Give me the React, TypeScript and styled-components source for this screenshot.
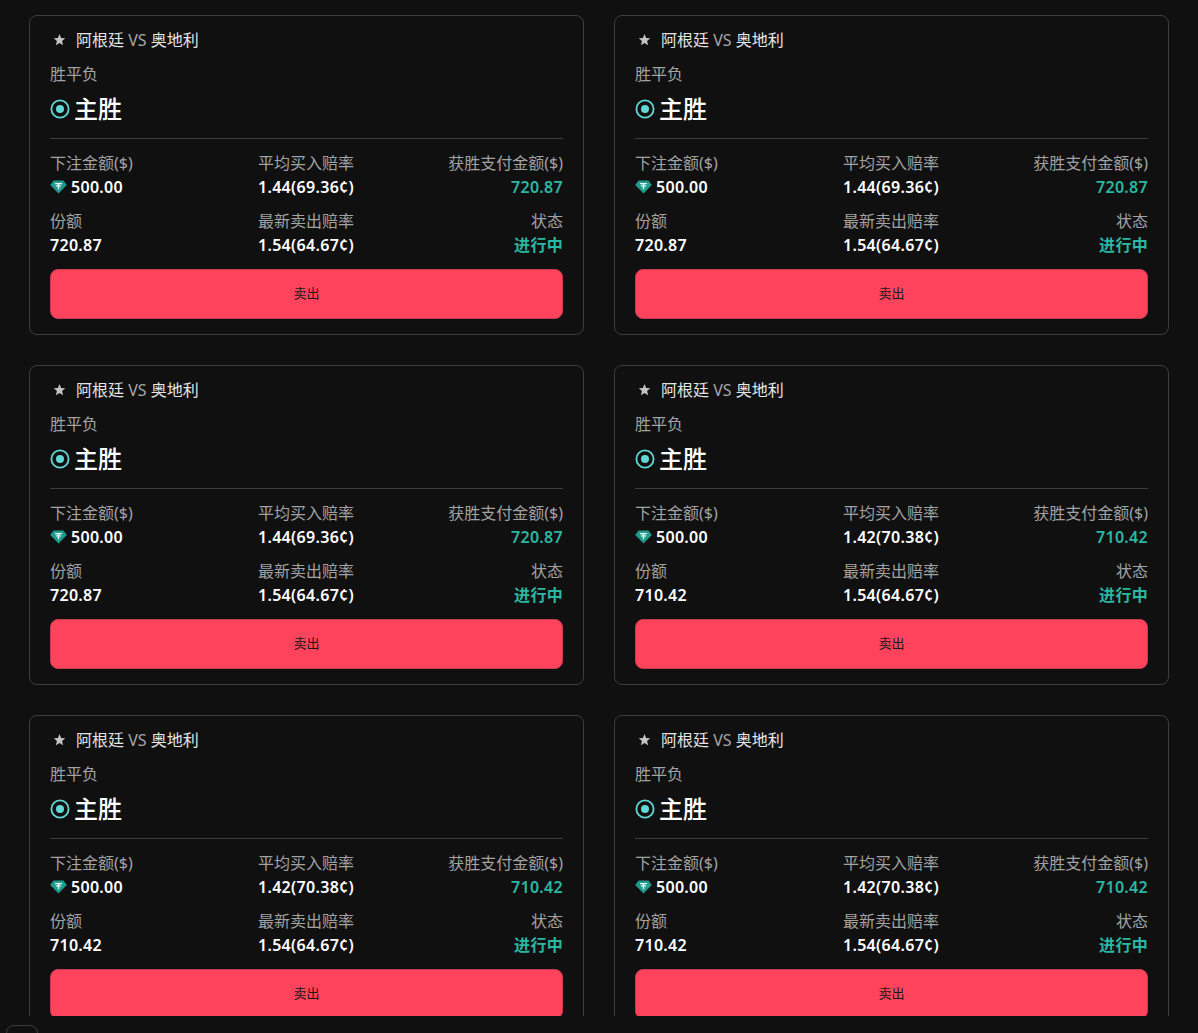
import React from 'react'
import styled, { createGlobalStyle } from 'styled-components'

const GlobalStyle = createGlobalStyle`
  html, body {
    margin: 0;
    height: 100%;
    overflow: hidden;
    background: #101011;
    font-family: "Noto Sans", "Noto Sans CJK SC", sans-serif;
  }
`

const Scroller = styled.div`
  height: 1016px;
  overflow: hidden;
  box-sizing: border-box;
  padding: 15px 29px 0;
`

const Grid = styled.div`
  display: grid;
  grid-template-columns: 555px 555px;
  column-gap: 30px;
  row-gap: 30px;
`

const Card = styled.div`
  box-sizing: border-box;
  height: 320px;
  border: 1px solid #3d3d40;
  border-radius: 8px;
  padding: 12px 20px 0;
  display: flex;
  flex-direction: column;
`

const Match = styled.div`
  display: flex;
  align-items: center;
  gap: 10px;
  height: 24px;
  padding-left: 3px;
  font-size: 16px;
  line-height: 24px;
  color: #e6e6e6;
`

const Vs = styled.span`
  color: #a8a8a8;
`

const Star = styled.svg`
  margin-top: -2px;
`

const Market = styled.div`
  margin-top: 10px;
  font-size: 16px;
  line-height: 24px;
  color: #a3a3a3;
`

const Pick = styled.div`
  margin-top: 4px;
  height: 34px;
  display: flex;
  align-items: center;
  gap: 4px;
  font-size: 24px;
  font-weight: 500;
  color: #ffffff;
`

const Radio = styled.svg`
  margin-top: 4px;
`

const Divider = styled.div`
  margin-top: 14px;
  height: 1px;
  flex-shrink: 0;
  background: #3d3d40;
`

const Stats = styled.div`
  margin-top: 12px;
  display: grid;
  grid-template-columns: 1fr 1fr 1fr;
  row-gap: 9.5px;
`

const Stat = styled.div<{ $align: string }>`
  display: flex;
  flex-direction: column;
  align-items: ${p => p.$align};
`

const MidStat = styled(Stat)`
  padding-left: 37px;
`

const Label = styled.div`
  font-size: 16px;
  line-height: 24px;
  color: #a3a3a3;
`

const Value = styled.div<{ $accent?: boolean }>`
  display: flex;
  align-items: center;
  gap: 4px;
  font-size: 16px;
  line-height: 24px;
  letter-spacing: 0.3px;
  font-weight: 600;
  color: ${p => (p.$accent ? '#2bb8a3' : '#ffffff')};
`

const SellButton = styled.button`
  margin-top: 12.5px;
  height: 50px;
  flex-shrink: 0;
  border: 1px solid #c93a50;
  border-radius: 8px;
  background: #ff435c;
  color: #1a1a1a;
  font-family: inherit;
  font-size: 13px;
  padding: 0 0 3px;
`

const Footer = styled.div`
  padding: 9px 0 0 6px;
`

const MiniButton = styled.div`
  width: 32px;
  height: 32px;
  box-sizing: border-box;
  border: 1px solid #3d3d40;
  border-radius: 8px;
`

const StarIcon = () => (
  <Star width="13" height="13" viewBox="0 0 24 24" fill="#c4c4c4">
    <path d="M12 2l3 7.2 7.6.6-5.8 5 1.8 7.6L12 18.3l-6.6 4.1 1.8-7.6-5.8-5L9 9.2z" />
  </Star>
)

const RadioIcon = () => (
  <Radio width="20" height="20" viewBox="0 0 20 20">
    <circle cx="10" cy="10" r="8.6" fill="none" stroke="#62d8d4" strokeWidth="1.8" />
    <circle cx="10" cy="10" r="4" fill="#62d8d4" />
  </Radio>
)

const TetherIcon = () => (
  <svg width="17" height="14" viewBox="0 0 17 14">
    <path d="M3.6 0.5h9.800L16.800 5 8.500 13.500 0.200 5z" fill="#1f9c8e" />
    <path d="M5 3h7v1.200H9.200v1c1.200.1 2.200.3 2.200.7s-1 .6-2.200.7v2.600H7.800V6.600c-1.200-.1-2.200-.3-2.200-.7s1-.6 2.200-.7v-1H5z" fill="#e8fbf7" />
  </svg>
)

type Bet = { buy: string; payout: string; shares: string }

const bets: Bet[] = [
  { buy: '1.44(69.36¢)', payout: '720.87', shares: '720.87' },
  { buy: '1.44(69.36¢)', payout: '720.87', shares: '720.87' },
  { buy: '1.44(69.36¢)', payout: '720.87', shares: '720.87' },
  { buy: '1.42(70.38¢)', payout: '710.42', shares: '710.42' },
  { buy: '1.42(70.38¢)', payout: '710.42', shares: '710.42' },
  { buy: '1.42(70.38¢)', payout: '710.42', shares: '710.42' },
]

const BetCard: React.FC<{ bet: Bet }> = ({ bet }) => (
  <Card>
    <Match>
      <StarIcon />
      <span>
        阿根廷 <Vs>VS</Vs> 奥地利
      </span>
    </Match>
    <Market>胜平负</Market>
    <Pick>
      <RadioIcon />
      主胜
    </Pick>
    <Divider />
    <Stats>
      <Stat $align="flex-start">
        <Label>下注金额($)</Label>
        <Value>
          <TetherIcon />
          500.00
        </Value>
      </Stat>
      <MidStat $align="flex-start">
        <Label>平均买入赔率</Label>
        <Value>{bet.buy}</Value>
      </MidStat>
      <Stat $align="flex-end">
        <Label>获胜支付金额($)</Label>
        <Value $accent>{bet.payout}</Value>
      </Stat>
      <Stat $align="flex-start">
        <Label>份额</Label>
        <Value>{bet.shares}</Value>
      </Stat>
      <MidStat $align="flex-start">
        <Label>最新卖出赔率</Label>
        <Value>1.54(64.67¢)</Value>
      </MidStat>
      <Stat $align="flex-end">
        <Label>状态</Label>
        <Value $accent>进行中</Value>
      </Stat>
    </Stats>
    <SellButton>卖出</SellButton>
  </Card>
)

export default function App() {
  return (
    <>
      <GlobalStyle />
      <Scroller>
        <Grid>
          {bets.map((bet, i) => (
            <BetCard key={i} bet={bet} />
          ))}
        </Grid>
      </Scroller>
      <Footer>
        <MiniButton />
      </Footer>
    </>
  )
}
